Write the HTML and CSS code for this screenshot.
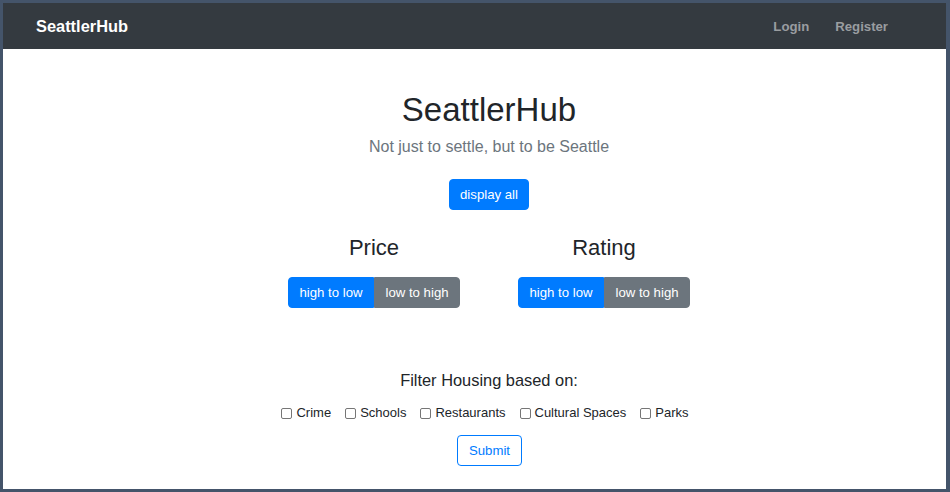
FILE: index.html
```html
<!DOCTYPE html>
<html lang="en">
<head>
<meta charset="utf-8">
<title>SeattlerHub</title>
<link rel="stylesheet" href="styles.css">
</head>
<body>
<div class="frame">
  <nav class="navbar">
    <a class="brand" href="#">SeattlerHub</a>
    <div class="nav-links">
      <a class="nav-link" href="#">Login</a>
      <a class="nav-link" href="#">Register</a>
    </div>
  </nav>
  <main class="main">
    <h1 class="title">SeattlerHub</h1>
    <p class="lead">Not just to settle, but to be Seattle</p>
    <button class="btn btn-primary display-all">display all</button>
    <div class="sorts">
      <section class="sort-col">
        <h2 class="sort-title">Price</h2>
        <div class="btn-group">
          <button class="btn btn-primary">high to low</button>
          <button class="btn btn-secondary">low to high</button>
        </div>
      </section>
      <section class="sort-col">
        <h2 class="sort-title">Rating</h2>
        <div class="btn-group">
          <button class="btn btn-primary">high to low</button>
          <button class="btn btn-secondary">low to high</button>
        </div>
      </section>
    </div>
    <form class="filter">
      <h3 class="filter-title">Filter Housing based on:</h3>
      <div class="checks">
        <label class="check"><input type="checkbox">Crime</label>
        <label class="check"><input type="checkbox">Schools</label>
        <label class="check"><input type="checkbox">Restaurants</label>
        <label class="check"><input type="checkbox">Cultural Spaces</label>
        <label class="check"><input type="checkbox">Parks</label>
      </div>
      <button type="button" class="btn btn-outline">Submit</button>
    </form>
  </main>
</div>
</body>
</html>
```

FILE: styles.css
```css
* { box-sizing: border-box; }
html, body { margin: 0; height: 100%; }
body {
  background: #44546a;
  padding: 3px 4px 3px 3px;
  font-family: "Liberation Sans", Arial, sans-serif;
  color: #212529;
}
.frame {
  background: #fff;
  height: 100%;
  overflow: hidden;
}
.navbar {
  height: 46px;
  background: #343a40;
  display: flex;
  align-items: center;
  justify-content: space-between;
  padding: 0 58px 0 33px;
}
.brand {
  color: #fff;
  font-weight: 700;
  font-size: 16.4px;
  text-decoration: none;
}
.nav-links { display: flex; gap: 26px; }
.nav-link {
  color: #9a9da0;
  font-weight: 700;
  font-size: 13.2px;
  text-decoration: none;
}
.main {
  display: flex;
  flex-direction: column;
  align-items: center;
  padding-left: 29px;
}
.title {
  margin: 41px 0 0;
  font-size: 33px;
  line-height: 40px;
  font-weight: 400;
}
.lead {
  margin: 5px 0 0;
  font-size: 16px;
  line-height: 24px;
  color: #6c757d;
}
.btn {
  font-family: inherit;
  font-size: 13.2px;
  height: 31px;
  padding: 0 10.5px;
  border: 1px solid transparent;
  border-radius: 4px;
  color: #fff;
  cursor: pointer;
}
.btn-primary { background: #007bff; border-color: #007bff; }
.btn-secondary { background: #6c757d; border-color: #6c757d; }
.btn-outline { background: #fff; border-color: #007bff; color: #007bff; padding: 0 10.5px; margin-left: 1px; }
.display-all { margin-top: 20px; }
.sorts { display: flex; margin-top: 25px; }
.sort-col {
  width: 230px;
  display: flex;
  flex-direction: column;
  align-items: center;
}
.sort-title {
  margin: 0;
  font-size: 22px;
  line-height: 26px;
  font-weight: 400;
}
.btn-group { display: flex; margin-top: 16px; }
.btn-group .btn:first-child { border-top-right-radius: 0; border-bottom-right-radius: 0; }
.btn-group .btn:last-child { border-top-left-radius: 0; border-bottom-left-radius: 0; }
.filter {
  display: flex;
  flex-direction: column;
  align-items: center;
  margin-top: 62px;
}
.filter-title {
  margin: 0;
  font-size: 16.4px;
  line-height: 20px;
  font-weight: 400;
}
.checks {
  display: flex;
  gap: 14px;
  margin-top: 15px;
  margin-left: -8px;
  font-size: 13px;
  line-height: 16px;
}
.check { display: flex; align-items: center; }
.check input {
  appearance: none;
  -webkit-appearance: none;
  width: 11px;
  height: 11px;
  margin: 0 4px 0 0;
  border: 1px solid #767676;
  border-radius: 2px;
  background: #fff;
}
.btn-outline { margin-top: 14px; }
```
